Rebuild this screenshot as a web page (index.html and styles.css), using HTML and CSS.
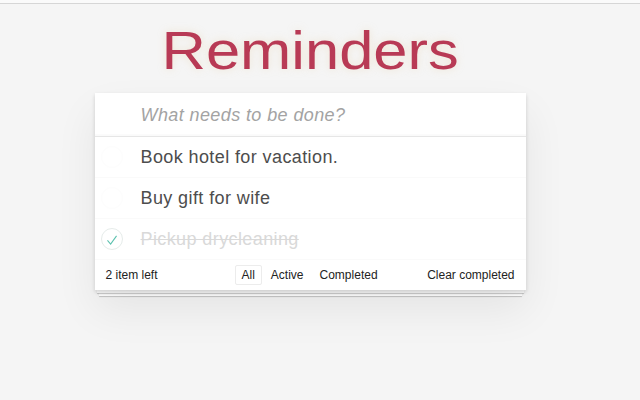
FILE: index.html
```html
<!DOCTYPE html>
<html>
<head>
<meta charset="utf-8">
<link rel="stylesheet" href="styles.css">
</head>
<body>
<div class="topbar"></div>
<section class="app">
  <h1 class="title"><span class="title-text">Reminders</span></h1>
  <div class="card">
    <div class="new-todo">What needs to be done?</div>
    <ul class="list">
      <li class="item"><span class="toggle"></span><span class="label">Book hotel for vacation.</span></li>
      <li class="item"><span class="toggle"></span><span class="label">Buy gift for wife</span></li>
      <li class="item done"><span class="toggle checked"><svg width="22" height="22" viewBox="0 0 22 22"><path d="M6 11.5 L9.5 15.5 L16 6.5" fill="none" stroke="#5dc2af" stroke-width="1.2"/></svg></span><span class="label">Pickup drycleaning</span></li>
    </ul>
    <div class="footer">
      <span class="count">2 item left</span>
      <div class="filters">
        <span class="filter selected">All</span>
        <span class="filter">Active</span>
        <span class="filter">Completed</span>
      </div>
      <span class="clear">Clear completed</span>
    </div>
  </div>
  <div class="stack1"></div>
  <div class="stack2"></div>
</section>
</body>
</html>
```
FILE: styles.css
```css
html, body {
  margin: 0;
  padding: 0;
}
body {
  background: #f5f5f5;
  font-family: "Liberation Sans", Arial, sans-serif;
  color: #4d4d4d;
  width: 640px;
  height: 400px;
  overflow: hidden;
}
.topbar {
  height: 3px;
  background: #fafafa;
  border-bottom: 1px solid #d6d6d6;
}
.app {
  width: 431px;
  margin: 0 auto;
  position: relative;
  left: -10px;
}
.title {
  margin: 0;
  height: 89px;
  text-align: center;
  font-weight: 400;
  font-size: 53px;
  line-height: 53px;
  padding-top: 20px;
  box-sizing: border-box;
  color: #b83a55;
}
.title-text {
  display: inline-block;
  transform: scaleX(1.16);
  text-shadow: 0 0 8px rgba(230, 200, 150, 0.35);
}
.card {
  background: #fff;
  box-shadow: 0 2px 4px rgba(0,0,0,0.15), 0 20px 40px rgba(0,0,0,0.07);
  position: relative;
  z-index: 2;
}
.new-todo {
  height: 44px;
  box-sizing: border-box;
  padding-left: 46px;
  line-height: 44px;
  font-size: 18px;
  letter-spacing: 0.4px;
  font-style: italic;
  color: #a3a3a3;
  border-bottom: 1px solid #e6e6e6;
  box-shadow: inset 0 -2px 1px rgba(0,0,0,0.02);
}
.list {
  list-style: none;
  margin: 0;
  padding: 0;
}
.item {
  height: 41px;
  display: flex;
  align-items: center;
  border-bottom: 1px solid #fafafa;
  box-sizing: border-box;
}
.toggle {
  width: 22px;
  height: 22px;
  margin-left: 6px;
  margin-right: 18px;
  border-radius: 50%;
  box-sizing: border-box;
  border: 1px solid #fdfdfd;
  display: flex;
}
.toggle.checked {
  border-color: #e6ecea;
}
.label {
  font-size: 18px;
  letter-spacing: 0.4px;
  color: #4d4d4d;
  padding-top: 1px;
}
.done .label {
  color: #d9d9d9;
  text-decoration: line-through;
}
.footer {
  height: 30px;
  display: flex;
  align-items: center;
  padding: 0 11px;
  font-size: 12px;
  color: #222;
}
.count {
  width: 120px;
}
.filters {
  display: flex;
  margin-left: 9px;
}
.filter {
  padding: 2px 6px;
  border: 1px solid transparent;
  border-radius: 2px;
  margin-right: 2px;
}
.filter.selected {
  border-color: #ececec;
}
.clear {
  margin-left: auto;
}
.stack1, .stack2 {
  background: #fff;
  height: 3px;
  box-shadow: 0 1px 1px rgba(0,0,0,0.2);
  position: relative;
}
.stack1 {
  margin: 0 2px;
  z-index: 1;
}
.stack2 {
  margin: 0 4px;
  z-index: 0;
}
```
